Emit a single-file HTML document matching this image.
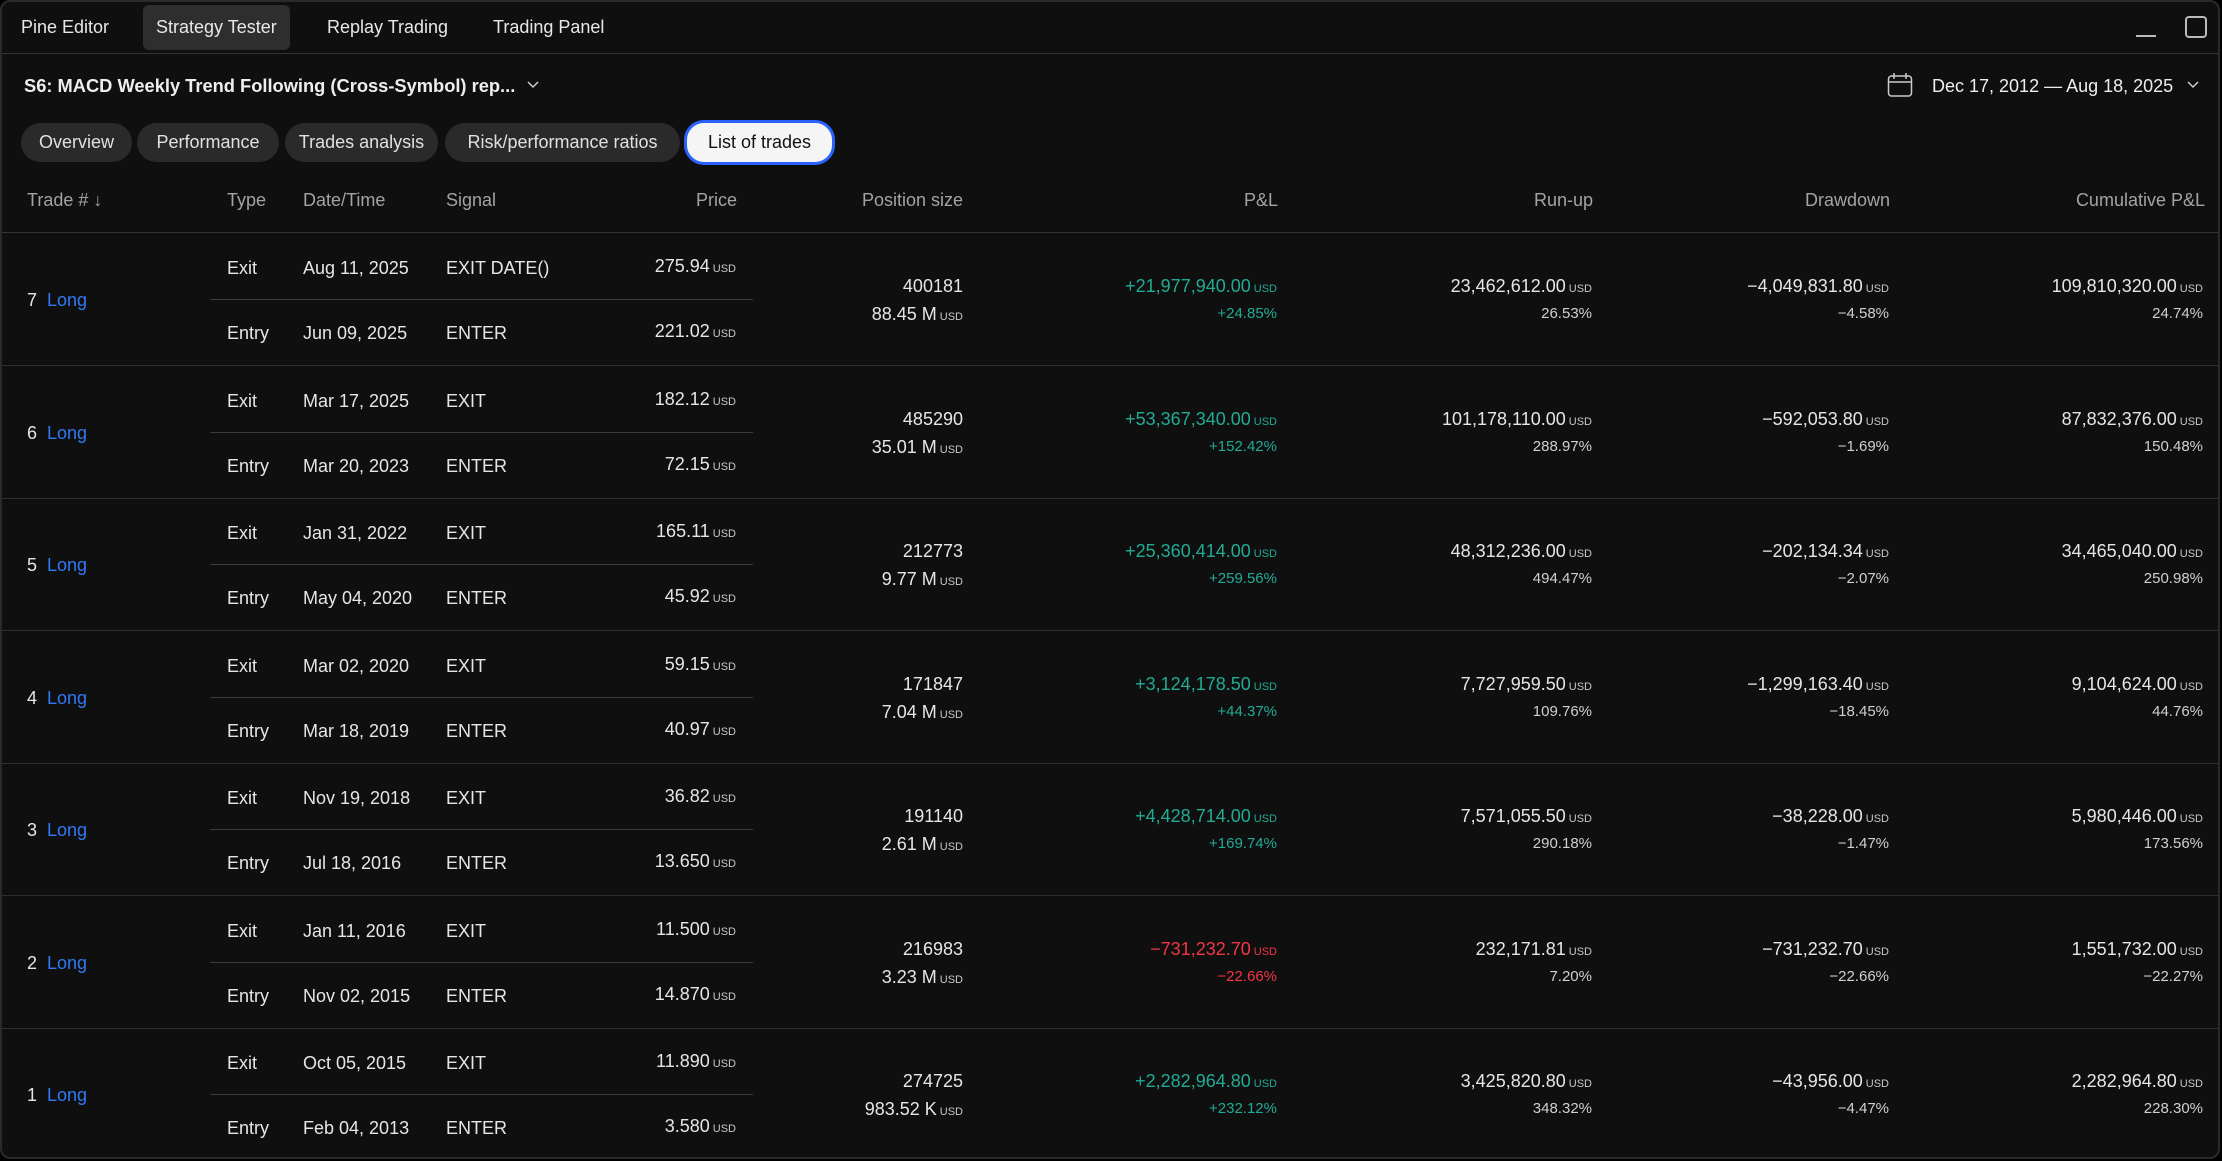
<!DOCTYPE html>
<html><head><meta charset="utf-8"><style>
*{margin:0;padding:0;box-sizing:border-box}
body{width:2222px;height:1160px;background:#000;font-family:"Liberation Sans",sans-serif;color:#dbdbdb;overflow:hidden;position:relative}
.frame{position:absolute;left:0;top:0;width:2220px;height:1159px;background:#0f0f0f;border:2px solid #2a2a2a;border-radius:10px}
.abs{position:absolute;white-space:nowrap}
.tab{position:absolute;top:5px;height:45px;line-height:45px;font-size:18px;color:#e8e8e8;padding:0 13px;border-radius:6px}
.pill{position:absolute;top:123px;height:39px;line-height:39px;font-size:18px;color:#e0e0e0;background:#2a2a2a;border-radius:20px;text-align:center}
.hd{position:absolute;top:188px;line-height:24px;font-size:18px;color:#a3a3a3;white-space:nowrap}
.r{position:absolute;left:2px;width:2216px;height:133px;border-bottom:1px solid #2e2e2e}
.c{position:absolute;line-height:24px;font-size:18px;color:#e6e6e6;white-space:nowrap;margin-top:2px}
.s{position:absolute;line-height:20px;font-size:15px;color:#d0d0d0;white-space:nowrap;margin-top:2px}
.u{font-size:11px;margin-left:3px;color:#c8c8c8}
.g{color:#22ab94}.g .u{color:#22ab94}
.rd{color:#f23645}.rd .u{color:#f23645}
.l{color:#3179f5;margin-left:10px}
.sep{position:absolute;left:208px;top:66px;width:543px;height:1px;background:#3a3a3a}
.ra{text-align:right}
</style></head><body>
<div class="frame"></div>
<div class="tab" style="left:8px">Pine Editor</div>
<div class="tab" style="left:143px;background:#2e2e2e">Strategy Tester</div>
<div class="tab" style="left:314px">Replay Trading</div>
<div class="tab" style="left:480px">Trading Panel</div>
<div class="abs" style="left:2136px;top:35px;width:20px;height:2px;background:#bbb"></div>
<div class="abs" style="left:2185px;top:16px;width:22px;height:22px;border:2px solid #bbb;border-radius:4px"></div>
<div class="abs" style="left:2px;top:53px;width:2216px;height:1px;background:#333"></div>
<div class="abs" style="left:24px;top:74px;font-size:18.3px;font-weight:bold;color:#eee;line-height:24px">S6: MACD Weekly Trend Following (Cross-Symbol) rep...</div>
<svg class="abs" style="left:527px;top:81px" width="12" height="8"><path d="M1 1l5 5 5-5" stroke="#ccc" stroke-width="1.5" fill="none"/></svg>
<svg class="abs" style="left:1887px;top:72px" width="26" height="26"><rect x="1.5" y="4" width="23" height="20" rx="3" stroke="#ccc" stroke-width="1.5" fill="none"/><path d="M1.5 10h23M7 1v6M19 1v6" stroke="#ccc" stroke-width="1.5"/></svg>
<div class="abs" style="left:1932px;top:74px;font-size:18px;color:#eee;line-height:24px">Dec 17, 2012 — Aug 18, 2025</div>
<svg class="abs" style="left:2187px;top:81px" width="12" height="8"><path d="M1 1l5 5 5-5" stroke="#ccc" stroke-width="1.5" fill="none"/></svg>
<div class="pill" style="left:21px;width:111px">Overview</div>
<div class="pill" style="left:137px;width:142px">Performance</div>
<div class="pill" style="left:285px;width:153px">Trades analysis</div>
<div class="pill" style="left:445px;width:235px">Risk/performance ratios</div>
<div class="pill" style="left:684px;top:120px;height:45px;line-height:39px;width:151px;background:#f5f5f5;color:#111;border:3px solid #2962ff">List of trades</div>
<div class="hd" style="left:27px">Trade # ↓</div>
<div class="hd" style="left:227px">Type</div>
<div class="hd" style="left:303px">Date/Time</div>
<div class="hd" style="left:446px">Signal</div>
<div class="hd ra" style="right:1485px">Price</div>
<div class="hd ra" style="right:1259px">Position size</div>
<div class="hd ra" style="right:944px">P&amp;L</div>
<div class="hd ra" style="right:629px">Run-up</div>
<div class="hd ra" style="right:332px">Drawdown</div>
<div class="hd ra" style="right:17px">Cumulative P&amp;L</div>
<div class="abs" style="left:2px;top:232px;width:2216px;height:1px;background:#333"></div>

<div class="r" style="top:233px">
<div class="c" style="left:25px;top:53px">7<span class="l">Long</span></div>
<div class="c" style="left:225px;top:21px">Exit</div><div class="c" style="left:301px;top:21px">Aug 11, 2025</div><div class="c" style="left:444px;top:21px">EXIT DATE()</div><div class="c ra" style="right:1482px;top:19px">275.94<span class="u">USD</span></div>
<div class="sep"></div>
<div class="c" style="left:225px;top:86px">Entry</div><div class="c" style="left:301px;top:86px">Jun 09, 2025</div><div class="c" style="left:444px;top:86px">ENTER</div><div class="c ra" style="right:1482px;top:84px">221.02<span class="u">USD</span></div>
<div class="c ra" style="right:1255px;top:39px">400181</div><div class="c ra" style="right:1255px;top:67px">88.45 M<span class="u">USD</span></div>
<div class="c ra g" style="right:941px;top:39px">+21,977,940.00<span class="u">USD</span></div><div class="s ra g" style="right:941px;top:69px">+24.85%</div>
<div class="c ra" style="right:626px;top:39px">23,462,612.00<span class="u">USD</span></div><div class="s ra" style="right:626px;top:69px">26.53%</div>
<div class="c ra" style="right:329px;top:39px">−4,049,831.80<span class="u">USD</span></div><div class="s ra" style="right:329px;top:69px">−4.58%</div>
<div class="c ra" style="right:15px;top:39px">109,810,320.00<span class="u">USD</span></div><div class="s ra" style="right:15px;top:69px">24.74%</div>
</div>

<div class="r" style="top:366px">
<div class="c" style="left:25px;top:53px">6<span class="l">Long</span></div>
<div class="c" style="left:225px;top:21px">Exit</div><div class="c" style="left:301px;top:21px">Mar 17, 2025</div><div class="c" style="left:444px;top:21px">EXIT</div><div class="c ra" style="right:1482px;top:19px">182.12<span class="u">USD</span></div>
<div class="sep"></div>
<div class="c" style="left:225px;top:86px">Entry</div><div class="c" style="left:301px;top:86px">Mar 20, 2023</div><div class="c" style="left:444px;top:86px">ENTER</div><div class="c ra" style="right:1482px;top:84px">72.15<span class="u">USD</span></div>
<div class="c ra" style="right:1255px;top:39px">485290</div><div class="c ra" style="right:1255px;top:67px">35.01 M<span class="u">USD</span></div>
<div class="c ra g" style="right:941px;top:39px">+53,367,340.00<span class="u">USD</span></div><div class="s ra g" style="right:941px;top:69px">+152.42%</div>
<div class="c ra" style="right:626px;top:39px">101,178,110.00<span class="u">USD</span></div><div class="s ra" style="right:626px;top:69px">288.97%</div>
<div class="c ra" style="right:329px;top:39px">−592,053.80<span class="u">USD</span></div><div class="s ra" style="right:329px;top:69px">−1.69%</div>
<div class="c ra" style="right:15px;top:39px">87,832,376.00<span class="u">USD</span></div><div class="s ra" style="right:15px;top:69px">150.48%</div>
</div>

<div class="r" style="top:498px">
<div class="c" style="left:25px;top:53px">5<span class="l">Long</span></div>
<div class="c" style="left:225px;top:21px">Exit</div><div class="c" style="left:301px;top:21px">Jan 31, 2022</div><div class="c" style="left:444px;top:21px">EXIT</div><div class="c ra" style="right:1482px;top:19px">165.11<span class="u">USD</span></div>
<div class="sep"></div>
<div class="c" style="left:225px;top:86px">Entry</div><div class="c" style="left:301px;top:86px">May 04, 2020</div><div class="c" style="left:444px;top:86px">ENTER</div><div class="c ra" style="right:1482px;top:84px">45.92<span class="u">USD</span></div>
<div class="c ra" style="right:1255px;top:39px">212773</div><div class="c ra" style="right:1255px;top:67px">9.77 M<span class="u">USD</span></div>
<div class="c ra g" style="right:941px;top:39px">+25,360,414.00<span class="u">USD</span></div><div class="s ra g" style="right:941px;top:69px">+259.56%</div>
<div class="c ra" style="right:626px;top:39px">48,312,236.00<span class="u">USD</span></div><div class="s ra" style="right:626px;top:69px">494.47%</div>
<div class="c ra" style="right:329px;top:39px">−202,134.34<span class="u">USD</span></div><div class="s ra" style="right:329px;top:69px">−2.07%</div>
<div class="c ra" style="right:15px;top:39px">34,465,040.00<span class="u">USD</span></div><div class="s ra" style="right:15px;top:69px">250.98%</div>
</div>

<div class="r" style="top:631px">
<div class="c" style="left:25px;top:53px">4<span class="l">Long</span></div>
<div class="c" style="left:225px;top:21px">Exit</div><div class="c" style="left:301px;top:21px">Mar 02, 2020</div><div class="c" style="left:444px;top:21px">EXIT</div><div class="c ra" style="right:1482px;top:19px">59.15<span class="u">USD</span></div>
<div class="sep"></div>
<div class="c" style="left:225px;top:86px">Entry</div><div class="c" style="left:301px;top:86px">Mar 18, 2019</div><div class="c" style="left:444px;top:86px">ENTER</div><div class="c ra" style="right:1482px;top:84px">40.97<span class="u">USD</span></div>
<div class="c ra" style="right:1255px;top:39px">171847</div><div class="c ra" style="right:1255px;top:67px">7.04 M<span class="u">USD</span></div>
<div class="c ra g" style="right:941px;top:39px">+3,124,178.50<span class="u">USD</span></div><div class="s ra g" style="right:941px;top:69px">+44.37%</div>
<div class="c ra" style="right:626px;top:39px">7,727,959.50<span class="u">USD</span></div><div class="s ra" style="right:626px;top:69px">109.76%</div>
<div class="c ra" style="right:329px;top:39px">−1,299,163.40<span class="u">USD</span></div><div class="s ra" style="right:329px;top:69px">−18.45%</div>
<div class="c ra" style="right:15px;top:39px">9,104,624.00<span class="u">USD</span></div><div class="s ra" style="right:15px;top:69px">44.76%</div>
</div>

<div class="r" style="top:763px">
<div class="c" style="left:25px;top:53px">3<span class="l">Long</span></div>
<div class="c" style="left:225px;top:21px">Exit</div><div class="c" style="left:301px;top:21px">Nov 19, 2018</div><div class="c" style="left:444px;top:21px">EXIT</div><div class="c ra" style="right:1482px;top:19px">36.82<span class="u">USD</span></div>
<div class="sep"></div>
<div class="c" style="left:225px;top:86px">Entry</div><div class="c" style="left:301px;top:86px">Jul 18, 2016</div><div class="c" style="left:444px;top:86px">ENTER</div><div class="c ra" style="right:1482px;top:84px">13.650<span class="u">USD</span></div>
<div class="c ra" style="right:1255px;top:39px">191140</div><div class="c ra" style="right:1255px;top:67px">2.61 M<span class="u">USD</span></div>
<div class="c ra g" style="right:941px;top:39px">+4,428,714.00<span class="u">USD</span></div><div class="s ra g" style="right:941px;top:69px">+169.74%</div>
<div class="c ra" style="right:626px;top:39px">7,571,055.50<span class="u">USD</span></div><div class="s ra" style="right:626px;top:69px">290.18%</div>
<div class="c ra" style="right:329px;top:39px">−38,228.00<span class="u">USD</span></div><div class="s ra" style="right:329px;top:69px">−1.47%</div>
<div class="c ra" style="right:15px;top:39px">5,980,446.00<span class="u">USD</span></div><div class="s ra" style="right:15px;top:69px">173.56%</div>
</div>

<div class="r" style="top:896px">
<div class="c" style="left:25px;top:53px">2<span class="l">Long</span></div>
<div class="c" style="left:225px;top:21px">Exit</div><div class="c" style="left:301px;top:21px">Jan 11, 2016</div><div class="c" style="left:444px;top:21px">EXIT</div><div class="c ra" style="right:1482px;top:19px">11.500<span class="u">USD</span></div>
<div class="sep"></div>
<div class="c" style="left:225px;top:86px">Entry</div><div class="c" style="left:301px;top:86px">Nov 02, 2015</div><div class="c" style="left:444px;top:86px">ENTER</div><div class="c ra" style="right:1482px;top:84px">14.870<span class="u">USD</span></div>
<div class="c ra" style="right:1255px;top:39px">216983</div><div class="c ra" style="right:1255px;top:67px">3.23 M<span class="u">USD</span></div>
<div class="c ra rd" style="right:941px;top:39px">−731,232.70<span class="u">USD</span></div><div class="s ra rd" style="right:941px;top:69px">−22.66%</div>
<div class="c ra" style="right:626px;top:39px">232,171.81<span class="u">USD</span></div><div class="s ra" style="right:626px;top:69px">7.20%</div>
<div class="c ra" style="right:329px;top:39px">−731,232.70<span class="u">USD</span></div><div class="s ra" style="right:329px;top:69px">−22.66%</div>
<div class="c ra" style="right:15px;top:39px">1,551,732.00<span class="u">USD</span></div><div class="s ra" style="right:15px;top:69px">−22.27%</div>
</div>

<div class="r" style="top:1028px;border-bottom:none">
<div class="c" style="left:25px;top:53px">1<span class="l">Long</span></div>
<div class="c" style="left:225px;top:21px">Exit</div><div class="c" style="left:301px;top:21px">Oct 05, 2015</div><div class="c" style="left:444px;top:21px">EXIT</div><div class="c ra" style="right:1482px;top:19px">11.890<span class="u">USD</span></div>
<div class="sep"></div>
<div class="c" style="left:225px;top:86px">Entry</div><div class="c" style="left:301px;top:86px">Feb 04, 2013</div><div class="c" style="left:444px;top:86px">ENTER</div><div class="c ra" style="right:1482px;top:84px">3.580<span class="u">USD</span></div>
<div class="c ra" style="right:1255px;top:39px">274725</div><div class="c ra" style="right:1255px;top:67px">983.52 K<span class="u">USD</span></div>
<div class="c ra g" style="right:941px;top:39px">+2,282,964.80<span class="u">USD</span></div><div class="s ra g" style="right:941px;top:69px">+232.12%</div>
<div class="c ra" style="right:626px;top:39px">3,425,820.80<span class="u">USD</span></div><div class="s ra" style="right:626px;top:69px">348.32%</div>
<div class="c ra" style="right:329px;top:39px">−43,956.00<span class="u">USD</span></div><div class="s ra" style="right:329px;top:69px">−4.47%</div>
<div class="c ra" style="right:15px;top:39px">2,282,964.80<span class="u">USD</span></div><div class="s ra" style="right:15px;top:69px">228.30%</div>
</div>
</body></html>
